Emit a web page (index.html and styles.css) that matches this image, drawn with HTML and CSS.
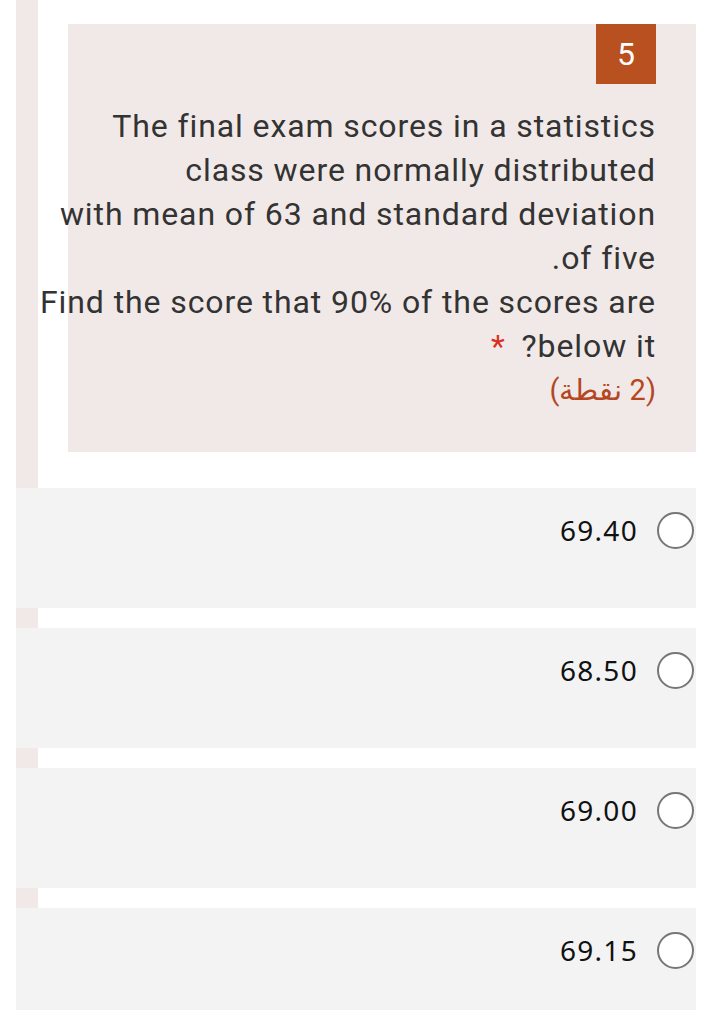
FILE: index.html
```html
<!DOCTYPE html>
<html lang="en">
<head>
<meta charset="utf-8">
<title>Question 5</title>
<link rel="stylesheet" href="styles.css">
</head>
<body>
<div class="page">
  <section class="question">
    <div class="card">
      <div class="badge-row"><div class="badge">5</div></div>
      <div class="qtext">
        <div>The final exam scores in a statistics</div>
        <div>class were normally distributed</div>
        <div>with mean of 63 and standard deviation</div>
        <div>of five.</div>
        <div>Find the score that 90% of the scores are</div>
        <div>below it?<span class="req">*</span></div>
        <div class="points">(2 نقطة)</div>
      </div>
    </div>
  </section>
  <div class="options">
    <label class="option"><span class="val">69.40</span><span class="radio"></span></label>
    <label class="option"><span class="val">68.50</span><span class="radio"></span></label>
    <label class="option"><span class="val">69.00</span><span class="radio"></span></label>
    <label class="option"><span class="val">69.15</span><span class="radio"></span></label>
  </div>
</div>
</body>
</html>
```
FILE: styles.css
```css
html, body {
  margin: 0;
  padding: 0;
  background: #ffffff;
}
body {
  font-family: Roboto, "Noto Sans", sans-serif;
  color: #333333;
}
.page {
  margin: 0 24px 0 16px;
  background: linear-gradient(to right, #f1e9e7 22px, transparent 22px);
}
.question {
  padding: 24px 0 36px 52px;
}
.card {
  background: #f1e9e7;
  padding: 0 40px 40px 0;
}
.badge-row {
  display: flex;
  justify-content: flex-end;
}
.badge {
  width: 60px;
  height: 60px;
  background: #b9501f;
  color: #ffffff;
  font-size: 32px;
  display: flex;
  align-items: center;
  justify-content: center;
}
.qtext {
  direction: rtl;
  margin-top: 20px;
  font-size: 32px;
  letter-spacing: 0.9px;
  line-height: 44px;
  white-space: nowrap;
}
.req {
  color: #d93025;
  margin-right: 16px;
}
.points {
  color: #b5461f;
  font-size: 29px;
  letter-spacing: 0.5px;
}
.options {
  display: flex;
  flex-direction: column;
  gap: 20px;
}
.option {
  height: 120px;
  box-sizing: border-box;
  background: #f3f3f3;
  display: flex;
  justify-content: flex-end;
  align-items: center;
  padding: 0 2px 36px 0;
  gap: 19px;
  color: #111111;
}
.val {
  font-family: "Noto Sans", sans-serif;
  font-size: 28px;
  letter-spacing: 1.3px;
  line-height: 44px;
}
.radio {
  width: 33px;
  height: 33px;
  border: 2px solid #767676;
  border-radius: 50%;
  background: #ffffff;
}
```
